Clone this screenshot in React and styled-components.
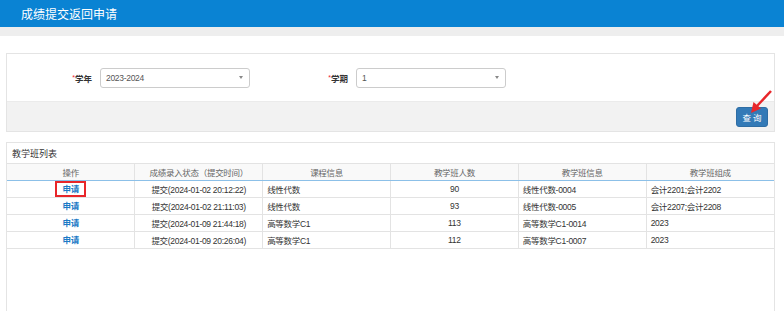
import styled, { createGlobalStyle } from "styled-components";

const GlobalStyle = createGlobalStyle`
  body {
    margin: 0;
    background: #fff;
    font-family: "Liberation Sans", "Noto Sans CJK SC", sans-serif;
    font-size: 8.5px;
    color: #333;
  }
`;

const Header = styled.div`
  height: 27px;
  background: #0a83d3;
  color: #fff;
  font-size: 12px;
  display: flex;
  align-items: center;
  padding-left: 21px;
`;

const Strip = styled.div`
  height: 9px;
  background: #eeeeee;
`;

const Content = styled.div`
  padding: 17px 9px 0 6px;
  display: flex;
  flex-direction: column;
  gap: 10px;
`;

const Panel = styled.div`
  border: 1px solid #e4e4e4;
  background: #fff;
  position: relative;
`;

const FormRow = styled.div`
  height: 47px;
  display: flex;
  align-items: center;
`;

const Field = styled.div`
  display: flex;
  align-items: center;
`;

const Label = styled.label`
  width: ${(p) => p.$w}px;
  text-align: right;
  padding-right: 8px;
  box-sizing: border-box;
  font-size: 8.5px;
  font-weight: bold;
  color: #333;
  & span {
    color: #e23;
    font-weight: normal;
    font-size: 7px;
    vertical-align: 2px;
  }
`;

const Select = styled.div`
  width: 150px;
  height: 20px;
  box-sizing: border-box;
  border: 1px solid #ccc;
  border-radius: 3px;
  display: flex;
  align-items: center;
  justify-content: space-between;
  padding: 0 6px 0 5px;
  color: #555;
  font-size: 8.5px;
  letter-spacing: -0.3px;
  &::after {
    content: "";
    border-left: 2px solid transparent;
    border-right: 2px solid transparent;
    border-top: 3px solid #888;
  }
`;

const Footer = styled.div`
  height: 29px;
  background: #f2f2f2;
  border-top: 1px solid #ebebeb;
  display: flex;
  align-items: center;
  justify-content: flex-end;
  padding-right: 6px;
`;

const Button = styled.button`
  width: 32px;
  height: 20px;
  padding: 0;
  border: 1px solid #2e6da4;
  border-radius: 3px;
  background: #337ab7;
  color: #fff;
  font-size: 8.5px;
  font-family: inherit;
  letter-spacing: 2px;
  text-indent: 2px;
`;

const Arrow = styled.svg`
  position: absolute;
  right: 1px;
  top: 36px;
`;

const Caption = styled.div`
  height: 20px;
  display: flex;
  align-items: center;
  padding-left: 5px;
  font-size: 9px;
  color: #333;
`;

const Table = styled.table`
  width: 100%;
  border-collapse: collapse;
  table-layout: fixed;
  margin-bottom: 70px;
  letter-spacing: -0.3px;
  & th {
    height: 16px;
    padding: 0;
    font-weight: normal;
    color: #666;
    background: #f9f9f9;
    border: 1px solid #e3e3e3;
    border-bottom: 1px solid #8cc0e8;
    text-align: center;
  }
  & th:first-child, & td:first-child { border-left: none; }
  & th:last-child, & td:last-child { border-right: none; }
  & td {
    height: 16px;
    padding: 0 4px;
    border: 1px solid #e3e3e3;
    color: #333;
    white-space: nowrap;
  }
`;

const Cell = styled.td`
  text-align: ${(p) => p.$align || "left"};
`;

const ApplyLink = styled.a`
  color: #1b7ac6;
  font-weight: bold;
  text-decoration: none;
  display: inline-block;
  line-height: 12px;
  padding: 0 5px;
  vertical-align: middle;
  border: 2px solid ${(p) => (p.$marked ? "#e8262a" : "transparent")};
`;

const rows = [
  ["提交(2024-01-02 20:12:22)", "线性代数", "90", "线性代数-0004", "会计2201;会计2202"],
  ["提交(2024-01-02 21:11:03)", "线性代数", "93", "线性代数-0005", "会计2207;会计2208"],
  ["提交(2024-01-09 21:44:18)", "高等数学C1", "113", "高等数学C1-0014", "2023"],
  ["提交(2024-01-09 20:26:04)", "高等数学C1", "112", "高等数学C1-0007", "2023"],
];

export default function App() {
  return (
    <>
      <GlobalStyle />
      <Header>成绩提交返回申请</Header>
      <Strip />
      <Content>
        <Panel>
          <FormRow>
            <Field>
              <Label $w={93}><span>*</span>学年</Label>
              <Select>2023-2024</Select>
            </Field>
            <Field>
              <Label $w={106}><span>*</span>学期</Label>
              <Select>1</Select>
            </Field>
          </FormRow>
          <Footer>
            <Button>查询</Button>
          </Footer>
          <Arrow width="26" height="26" viewBox="0 0 26 26">
            <line x1="24" y1="1" x2="10" y2="16" stroke="#e8262a" strokeWidth="2.5" />
            <polygon points="4,23 6.5,12 14,18.5" fill="#e8262a" />
          </Arrow>
        </Panel>
        <Panel>
          <Caption>教学班列表</Caption>
          <Table>
            <thead>
              <tr>
                <th>操作</th>
                <th>成绩录入状态（提交时间）</th>
                <th>课程信息</th>
                <th>教学班人数</th>
                <th>教学班信息</th>
                <th>教学班组成</th>
              </tr>
            </thead>
            <tbody>
              {rows.map((r, i) => (
                <tr key={i}>
                  <Cell $align="center">
                    <ApplyLink $marked={i === 0}>申请</ApplyLink>
                  </Cell>
                  <Cell $align="center">{r[0]}</Cell>
                  <Cell>{r[1]}</Cell>
                  <Cell $align="center">{r[2]}</Cell>
                  <Cell>{r[3]}</Cell>
                  <Cell>{r[4]}</Cell>
                </tr>
              ))}
            </tbody>
          </Table>
        </Panel>
      </Content>
    </>
  );
}
